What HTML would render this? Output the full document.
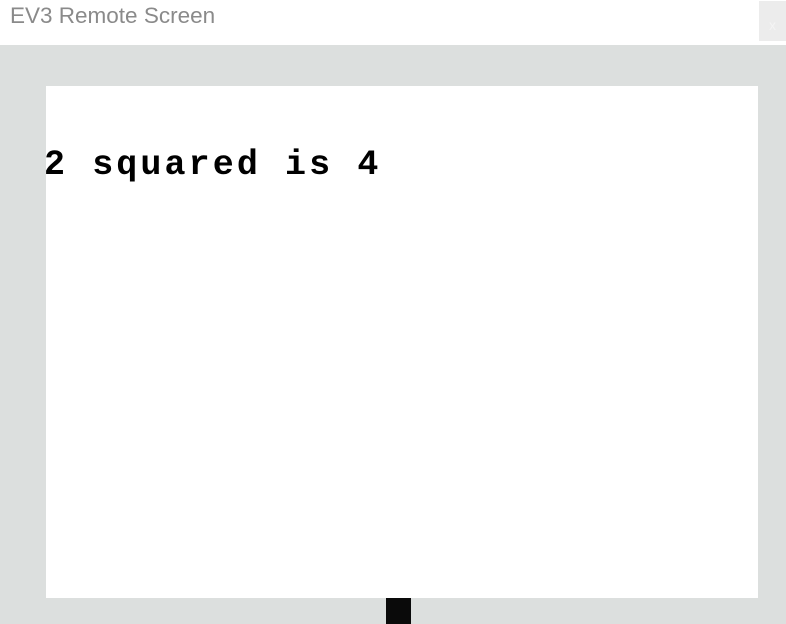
<!DOCTYPE html>
<html><head><style>
html,body{margin:0;padding:0;width:786px;height:624px;overflow:hidden;background:#dcdfde;font-family:"Liberation Sans",sans-serif;}
.title{position:absolute;left:0;top:0;width:786px;height:45px;background:#fff;}
.title span{position:absolute;left:10px;top:3px;font-size:22.5px;color:#8a8a8a;}
.close{position:absolute;left:759px;top:1px;width:27px;height:40px;background:#ececec;color:#f4f4f4;font-size:14px;text-align:center;line-height:48px;}
.screen{position:absolute;left:46px;top:86px;width:712px;height:512px;background:#fff;}
.txt{position:absolute;left:44px;top:145px;font-family:"Liberation Mono",monospace;font-weight:bold;font-size:35px;letter-spacing:3.1px;color:#000;white-space:pre;line-height:40px;}
.post{position:absolute;left:386px;top:598px;width:25px;height:26px;background:#0a0a0a;}
</style></head><body>
<div class="title"><span>EV3 Remote Screen</span><div class="close">x</div></div>
<div class="screen"></div>
<div class="txt">2 squared is 4</div>
<div class="post"></div>
</body></html>
